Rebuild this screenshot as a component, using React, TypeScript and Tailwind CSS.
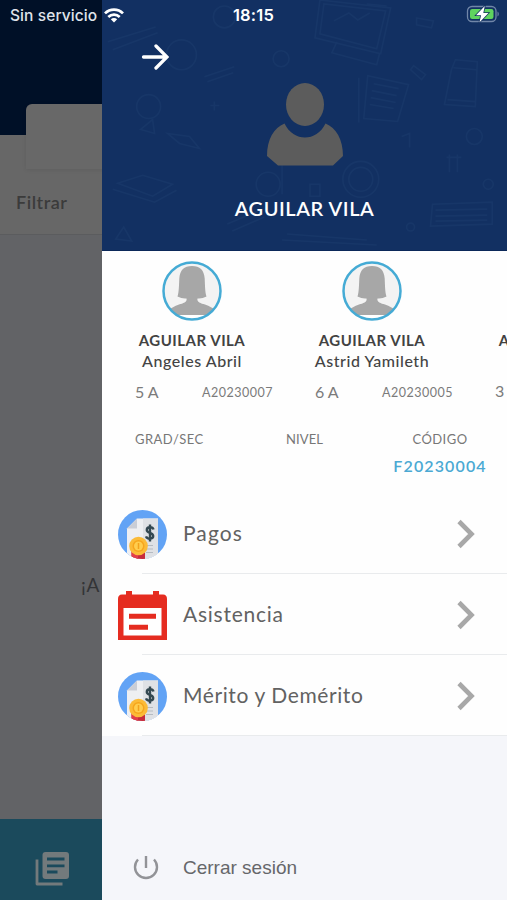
import type { ReactNode } from "react";

const students = [
  { surname: "AGUILAR VILA", name: "Angeles Abril", grade: "5 A", code: "A20230007" },
  { surname: "AGUILAR VILA", name: "Astrid Yamileth", grade: "6 A", code: "A20230005" },
  { surname: "AGUILAR VILA", name: "", grade: "3 A", code: "" },
];

const StatusBar = () => (
  <div className="absolute inset-x-0 top-0 z-20 flex h-[30px] items-center justify-between pl-[10px] pr-[8px] font-[Inter,sans-serif] text-white">
    <div className="flex w-[130px] items-center gap-[6px]">
      <span className="w-[88px] whitespace-nowrap pt-px text-[15.5px] font-medium tracking-[0.1px] text-[#dfe3ea]">Sin servicio</span>
      <svg className="h-[15px] w-[20px] shrink-0" viewBox="0 0 20 15" fill="none" stroke="white" strokeWidth="2.7">
        <path d="M1 5.4C6 .4 14 .4 19 5.4" />
        <path d="M4.3 8.9C7.6 5.8 12.4 5.8 15.7 8.9" />
        <path d="M10 14.6L6.8 11.3C8.6 9.7 11.4 9.7 13.2 11.3Z" fill="white" stroke="none" />
      </svg>
    </div>
    <span className="mr-[2px] text-[16.5px] font-semibold tracking-[0.2px]">18:15</span>
    <div className="flex w-[130px] justify-end">
      <svg className="-mt-[2px] h-[18px] w-[34px]" viewBox="0 0 34 18">
        <rect x="2.5" y="1.5" width="28.5" height="15" rx="4.5" fill="none" stroke="#7186a8" strokeWidth="1.3" />
        <path d="M32.5 6.5C34.2 7.4 34.2 10.6 32.5 11.5Z" fill="#7186a8" />
        <rect x="5" y="4" width="23.5" height="10" rx="2.2" fill="#5fd35f" />
        <path d="M19.8 1L11 10.2H16.1L14.4 17.4L23.5 7.9H18.3Z" fill="white" stroke="#12305f" strokeWidth="1.5" paintOrder="stroke" />
      </svg>
    </div>
  </div>
);

const Backdrop = () => (
  <div className="flex h-full w-full flex-col bg-[#626366] font-[Lato,sans-serif]">
    <div className="h-[235px] border-b border-[#5b5c5e] bg-[#676767]">
      <div className="h-[135px] bg-[#001027] pl-[26px] pt-[104px]">
        <div className="h-[65px] rounded-tl-[6px] bg-[#686868] shadow-[0_1px_4px_rgba(0,0,0,0.08)]" />
      </div>
      <p className="pl-[16px] pt-[54px] text-[18px] font-semibold leading-[26px] tracking-[0.03em] text-[#3b3b3b]">Filtrar</p>
    </div>
    <div className="flex-1 pl-[81px] pt-[337px]">
      <span className="text-[19px] leading-[26px] tracking-[0.04em] text-[#333436]">¡A</span>
    </div>
    <div className="h-[81px] bg-[#1b4a5c] pl-[34px] pt-[32px]">
      <svg className="h-[37px] w-[37px]" viewBox="0 0 37 37">
        <path d="M3 8.5v24.500h25.500" fill="none" stroke="#737a7c" strokeWidth="2.8" strokeLinejoin="round" />
        <rect x="8.5" y="1" width="26.500" height="27" rx="3" fill="#737a7c" />
        <path d="M13 8h17.500M13 14.800h17.500M13 21h10.500" stroke="#1b4a5c" strokeWidth="2.8" />
      </svg>
    </div>
  </div>
);

// School supplies scattered faintly over the blue header
const HeaderPattern = () => (
  <svg className="absolute inset-0 h-full w-full" viewBox="0 0 405 251" fill="none" stroke="#2d5280" strokeWidth="1.6" opacity="0.2">
    <path d="M218 0L213 38L279 54L289 8ZM222 4L218 34L275 49L284 11ZM235 42L230 53L275 65L278 53M232 21l15-8 9 7 12-7" />
    <path d="M266 76L262 119L296 122L307 85ZM257 78v45M272 84l25 5M270 91l25 5M269 98l25 5M268 105l24 4" />
    <path d="M354 60l22 2-2 45-31-2 7-35ZM352 68l23 2M346 100l28 2M312 66l12 9-4 5-11-10Z" />
    <path d="M15 184l25-8 30 9-20 12ZM10 190l42 13 22-12M65 134l22 3 10 12-20-5Z" />
    <path d="M331 205l60-2v22l-62 2ZM334 211l52-1M334 217l52-1M334 222l52-1" />
    <path d="M5 42l48-15M10 50l45-17M102 77l30-10M105 82l26-9M38 130l12-10 2 14Z" />
    <path d="M185 235l80 6M180 241l95 5M265 4l20 2M125 225l35-15M130 232l32-14M13 240l8-12 8 14Z" />
    <circle cx="259" cy="180" r="12" /><circle cx="259" cy="180" r="18" />
    <circle cx="373" cy="137" r="8" /><circle cx="79" cy="55" r="15" />
    <circle cx="179" cy="59" r="8" /><circle cx="46" cy="107" r="12" />
    <circle cx="122" cy="17" r="11" /><circle cx="166" cy="185" r="12" />
    <circle cx="387" cy="185" r="5" /><circle cx="309" cy="228" r="4" />
    <path d="M315 18l17 3-2 7-15-3ZM348 155v18M356 155v18M345 158h15M300 137l8-3v14M208 185v12h10v-12ZM180 160v35M112 102v9M108 106h9" />
  </svg>
);

const StudentAvatar = () => (
  <svg viewBox="0 0 60 60" className="h-[60px] w-[60px]">
    <clipPath id="avatar-clip">
      <circle cx="30" cy="30" r="29" />
    </clipPath>
    <circle cx="30" cy="30" r="29" fill="#f3f3f3" />
    <g clipPath="url(#avatar-clip)">
      <path
        d="M15.500 35.500C17 31 17 24 17.300 17.500C18 9 22 5 30 5S42 9 42.700 17.500C43 24 43 31 44.500 35.500Q40 38 35.500 37.500C34.500 41 39 42.500 43 43.500Q50 46 53 49V54H7V49Q10 46 17 43.500C21 42.500 25.500 41 24.500 37.500Q20 38 15.500 35.500Z"
        fill="#a7a7a7"
      />
      <rect y="54" width="60" height="6" fill="white" />
    </g>
    <circle cx="30" cy="30" r="28.500" fill="none" stroke="#45abd5" strokeWidth="2.500" />
  </svg>
);

const PaymentIcon = ({ id }: { id: string }) => (
  <svg className="h-[49px] w-[49px]" viewBox="0 0 49 49">
    <clipPath id={id}>
      <circle cx="24.5" cy="24.5" r="24.5" />
    </clipPath>
    <g clipPath={`url(#${id})`}>
      <rect width="49" height="49" fill="#62a3f5" />
      <path d="M19 8.5H40V49H9V18.5Z" fill="#eeeff2" />
      <path d="M25 8.5H40V49H25Z" fill="#dfe1e5" />
      <path d="M19 8.5V18.5H9Z" fill="#c9cdd6" />
      <path d="M28 35.500h7M28 39h7M28 42.500h7" stroke="#b6bbc2" strokeWidth="1.1" />
      <path d="M35.500 19.500C34.500 16.300 28.800 16.500 28.800 20C28.800 23.700 35.200 22 35.200 26C35.200 29.500 29.200 29.500 28 26.300M32 14.500V31.500" fill="none" stroke="#344851" strokeWidth="2.4" />
      <path d="M13.5 40H27V49H13.5Z" fill="#c72c3d" />
      <path d="M13.5 40H20V49H13.5Z" fill="#e23e4b" />
      <circle cx="20.5" cy="36" r="9.3" fill="#fbbb38" />
      <circle cx="20.5" cy="36" r="6" fill="#f6a51c" />
      <circle cx="20.5" cy="36" r="4.5" fill="#ffcd4d" />
      <path d="M20.5 33v6" stroke="#f2a21c" strokeWidth="1.5" />
    </g>
  </svg>
);

const CalendarIcon = () => (
  <svg className="h-[49px] w-[49px]" viewBox="0 0 49 49">
    <path d="M0 49V8Q0 3.5 4 3.5H8V0H14V3.5H35V0H41V3.5H45Q49 3.5 49 8V49Z" fill="#e52c20" />
    <path d="M5.5 17H43.5V44.5H5.5Z" fill="white" />
    <path d="M11 25.3H38M11 36.3H30" stroke="#e52c20" strokeWidth="5" />
  </svg>
);

const MenuRow = ({ icon, children }: { icon: ReactNode; children: ReactNode }) => (
  <div className="relative flex h-[81px] items-center pl-[16px] pr-[31px] pt-px">
    {icon}
    <span className="ml-[16px] flex-1 pb-[2px] text-[21px] text-[#626262]">{children}</span>
    <svg className="h-[30px] w-[20px]" viewBox="0 0 20 30" fill="none" stroke="#a8a8a8" strokeWidth="4.6">
      <path d="M3 2.5L15.500 15L3 27.5" />
    </svg>
    <div className="absolute bottom-0 left-[40px] right-0 h-px bg-[#e9ebed]" />
  </div>
);

const Drawer = () => (
  <div className="absolute inset-y-0 left-[102px] right-0 z-10 flex flex-col overflow-hidden bg-[#f5f6fa] font-[Lato,sans-serif]">
    <div className="relative h-[251px] shrink-0 border-b border-[#0b2859] bg-[#123062]">
      <HeaderPattern />
      <div className="relative flex h-full flex-col items-center pt-[43px]">
        <svg className="ml-[39px] mr-auto h-[28px] w-[28px]" viewBox="0 0 28 28" fill="none" stroke="white" strokeWidth="3.3" strokeLinecap="round">
          <path d="M2.500 14H25M15 3L26 14L15 25" />
        </svg>
        <svg className="mt-[12px] h-[83px] w-[76px]" viewBox="0 0 76 83" fill="#5c5c5c">
          <ellipse cx="38" cy="21.5" rx="19" ry="21.5" />
          <path d="M17.500 40.500C22 50 30 54.500 38 54.500S54 50 58.500 40.500C69 45 76 56 76 73L66 82.500H11L0 73C0 56 7 45 17.500 40.500Z" />
        </svg>
        <h1 className="mt-[28px] text-[20px] font-semibold leading-[28px] tracking-[0.55px] text-white">AGUILAR VILA</h1>
      </div>
    </div>

    <div className="h-[242px] shrink-0 bg-[#fefefe]">
      <div className="flex pt-[10px]">
        {students.map((student, i) => (
          <div key={i} className="flex w-[180px] shrink-0 flex-col items-center">
            <StudentAvatar />
            <p className="mt-[8px] text-[15px] font-bold leading-[22px] tracking-[0.5px] text-[#424242]">{student.surname}</p>
            <p className="h-[22px] text-[16px] font-medium leading-[20px] tracking-[0.55px] text-[#444]">{student.name}</p>
            <div className="mt-[7px] flex w-full items-center justify-between pl-[33px] pr-[9px] leading-[22px] text-[#7b7b7b]">
              <span className="text-[16px]">{student.grade}</span>
              <span className="pt-[2px] text-[12.5px] tracking-[0.5px]">{student.code}</span>
            </div>
          </div>
        ))}
      </div>
      <div className="mt-[26px] flex pl-[33px] pr-[20px] text-[13px] leading-[18px] tracking-[0.45px] text-[#777]">
        <span className="w-[151px]">GRAD/SEC</span>
        <span className="tracking-[0.1px]">NIVEL</span>
        <div className="ml-auto flex w-[94px] flex-col items-center">
          <span>CÓDIGO</span>
          <span className="mt-[7px] text-[16px] font-semibold leading-[22px] tracking-[0.07em] text-[#4ba9d3]">F20230004</span>
        </div>
      </div>
    </div>

    <div className="bg-[#fefefe]">
      <MenuRow icon={<PaymentIcon id="pagos" />}>
        <span className="tracking-[1.1px]">Pagos</span>
      </MenuRow>
      <MenuRow icon={<CalendarIcon />}>
        <span className="tracking-[0.75px]">Asistencia</span>
      </MenuRow>
      <MenuRow icon={<PaymentIcon id="merito" />}>
        <span className="tracking-[0.6px]">Mérito y Demérito</span>
      </MenuRow>
    </div>

    <div className="mt-auto flex h-[65px] items-center pl-[31px] font-['Liberation_Sans',sans-serif]">
      <svg className="h-[26px] w-[26px]" viewBox="0 0 26 26" fill="none" stroke="#929397" strokeWidth="2.4">
        <path d="M5 4.5A11 11 0 1 0 21 4.5M13 1V13" />
      </svg>
      <span className="ml-[24px] pt-px text-[19px] text-[#66676a]">Cerrar sesión</span>
    </div>
  </div>
);

const App = () => (
  <div className="relative h-[900px] w-full overflow-hidden">
    <Backdrop />
    <Drawer />
    <StatusBar />
  </div>
);

export default App;
